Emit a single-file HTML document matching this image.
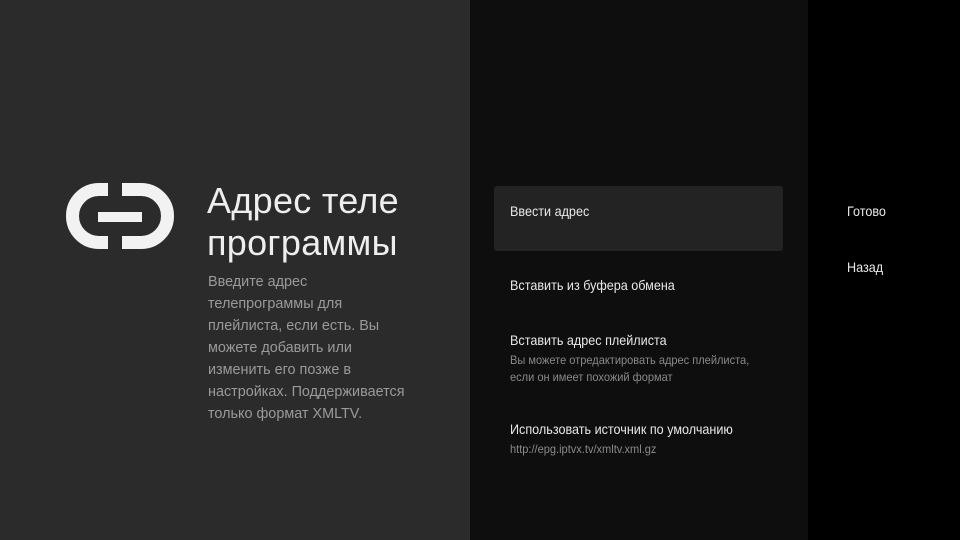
<!DOCTYPE html>
<html><head><meta charset="utf-8"><style>
*{margin:0;padding:0;box-sizing:border-box}
body{width:960px;height:540px;overflow:hidden;background:#000;font-family:"Liberation Sans","DejaVu Sans",sans-serif;position:relative}
.l{position:absolute;left:0;top:0;width:470px;height:540px;background:#2b2b2b}
.m{position:absolute;left:470px;top:0;width:338px;height:540px;background:#0e0e0e}
.r{position:absolute;left:808px;top:0;width:152px;height:540px;background:#000}
.t{position:absolute;left:207px;top:180px;color:#eee;font-size:36px;line-height:42px;font-weight:300;letter-spacing:0.3px}
.d{position:absolute;left:208px;top:271px;color:#9a9a9a;font-size:14.4px;line-height:22px;white-space:nowrap}
.n{transform-origin:0 0;white-space:nowrap}
.sel{position:absolute;left:494px;top:186px;width:289px;height:65px;background:#232323;border-radius:3px}
.i{position:absolute;left:510px;color:#e8e8e8;font-size:14px;transform:scaleX(0.9)}
.s{position:absolute;left:510px;color:#8a8a8a;font-size:12px;line-height:17px;transform:scaleX(0.92)}
.a{position:absolute;left:847px;color:#e8e8e8;font-size:14px;transform:scaleX(0.9)}
</style></head><body>
<div class="l"></div><div class="m"></div><div class="r"></div>
<svg style="position:absolute;left:66px;top:183px" width="108" height="66" viewBox="0 0 108 66">
<path d="M42 6.5 H33 A26.5 26.5 0 0 0 33 59.5 H42" fill="none" stroke="#f2f2f2" stroke-width="13"/>
<path d="M56 6.5 H75 A26.5 26.5 0 0 1 75 59.5 H56" fill="none" stroke="#f2f2f2" stroke-width="13"/>
<rect x="32" y="29" width="44" height="10" fill="#f2f2f2"/>
</svg>
<div class="t">Адрес теле<br>программы</div>
<div class="d">Введите адрес<br>телепрограммы для<br>плейлиста, если есть. Вы<br>можете добавить или<br>изменить его позже в<br>настройках. Поддерживается<br>только формат XMLTV.</div>
<div class="sel"></div>
<div class="i n" style="top:203px">Ввести адрес</div>
<div class="i n" style="top:277px">Вставить из буфера обмена</div>
<div class="i n" style="top:332px">Вставить адрес плейлиста</div>
<div class="s n" style="top:352px">Вы можете отредактировать адрес плейлиста,<br>если он имеет похожий формат</div>
<div class="i n" style="top:421px">Использовать источник по умолчанию</div>
<div class="s n" style="top:441px">http://epg.iptvx.tv/xmltv.xml.gz</div>
<div class="a n" style="top:203px">Готово</div>
<div class="a n" style="top:259px">Назад</div>
</body></html>
